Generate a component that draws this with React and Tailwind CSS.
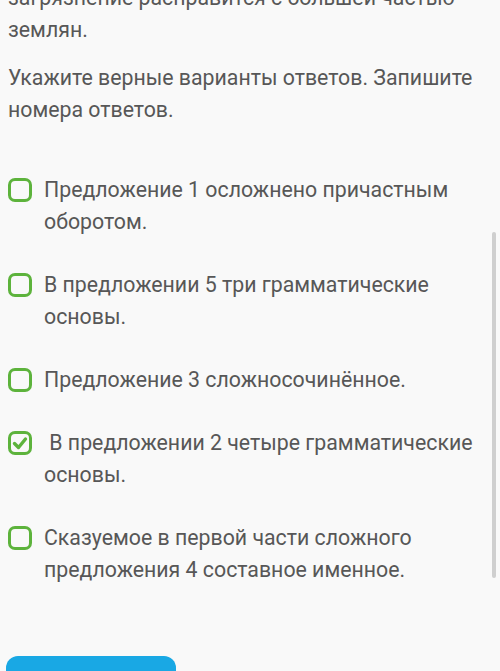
export default function App() {
  const options = [
    { text: "Предложение 1 осложнено причастным оборотом.", checked: false },
    { text: "В предложении 5 три грамматические основы.", checked: false },
    { text: "Предложение 3 сложносочинённое.", checked: false },
    { text: "\u00a0В предложении 2 четыре грамматические основы.", checked: true },
    { text: "Сказуемое в первой части сложного предложения 4 составное именное.", checked: false },
  ];
  return (
    <div className="relative w-[500px] h-[671px] overflow-hidden bg-[#f9f9f9] text-[#575757] text-[21.3px] leading-[32px]" style={{ fontFamily: "Roboto, 'Noto Sans', sans-serif" }}>
      <div className="pl-2 pr-3 -mt-[18px]">
        <p>загрязнение расправится с большей частью землян.</p>
        <p className="mt-4">Укажите верные варианты ответов. Запишите номера ответов.</p>
      </div>
      <div className="mt-[48px] pl-2 pr-5 flex flex-col gap-[31px]">
        {options.map((o, i) => (
          <div key={i} className="flex items-start gap-3">
            <div className="mt-1 w-6 h-6 shrink-0 rounded-[7px] border-[3px] border-[#5db33c] flex items-center justify-center">
              {o.checked && (
                <svg width="16" height="16" viewBox="0 0 16 16">
                  <path d="M2.5 8.5 L6.5 12.5 L13.5 4" fill="none" stroke="#5db33c" strokeWidth="3.4" strokeLinecap="round" strokeLinejoin="round" />
                </svg>
              )}
            </div>
            <p>{o.text}</p>
          </div>
        ))}
      </div>
      <div className="mt-[70px] ml-[6px] w-[170px] h-12 rounded-xl bg-[#19a8e4]"></div>
      <div className="absolute left-[492px] top-[232px] w-1 h-[346px] bg-[#cfcfcf] rounded-sm"></div>
    </div>
  );
}
